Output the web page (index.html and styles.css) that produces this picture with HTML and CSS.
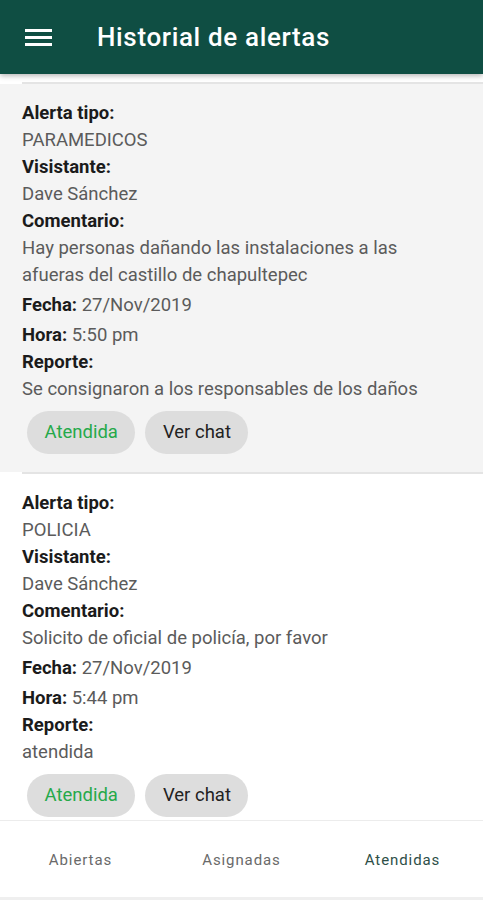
FILE: index.html
```html
<!DOCTYPE html>
<html lang="es">
<head>
<meta charset="utf-8">
<title>Historial de alertas</title>
<link rel="stylesheet" href="styles.css">
</head>
<body>
<div class="app">
  <header class="appbar">
    <svg class="menu" width="27" height="18" viewBox="0 0 27 18"><rect x="0" y="0" width="27" height="3" fill="#fff"/><rect x="0" y="7" width="27" height="3" fill="#fff"/><rect x="0" y="14" width="27" height="3" fill="#fff"/></svg>
    <h1 class="title">Historial de alertas</h1>
  </header>
  <main class="list">
    <div class="divider"></div>
    <section class="card card-pressed">
      <div class="label">Alerta tipo:</div>
      <div class="value">PARAMEDICOS</div>
      <div class="label">Visistante:</div>
      <div class="value">Dave Sánchez</div>
      <div class="label">Comentario:</div>
      <div class="value">Hay personas dañando las instalaciones a las afueras del castillo de chapultepec</div>
      <div class="inline"><span class="label-in">Fecha:</span> 27/Nov/2019</div>
      <div class="inline"><span class="label-in">Hora:</span> 5:50 pm</div>
      <div class="label">Reporte:</div>
      <div class="value">Se consignaron a los responsables de los daños</div>
      <div class="actions">
        <span class="chip chip-green">Atendida</span>
        <span class="chip">Ver chat</span>
      </div>
    </section>
    <div class="divider"></div>
    <section class="card">
      <div class="label">Alerta tipo:</div>
      <div class="value">POLICIA</div>
      <div class="label">Visistante:</div>
      <div class="value">Dave Sánchez</div>
      <div class="label">Comentario:</div>
      <div class="value">Solicito de oficial de policía, por favor</div>
      <div class="inline"><span class="label-in">Fecha:</span> 27/Nov/2019</div>
      <div class="inline"><span class="label-in">Hora:</span> 5:44 pm</div>
      <div class="label">Reporte:</div>
      <div class="value">atendida</div>
      <div class="actions">
        <span class="chip chip-green">Atendida</span>
        <span class="chip">Ver chat</span>
      </div>
    </section>
  </main>
  <nav class="tabs">
    <span class="tab">Abiertas</span>
    <span class="tab">Asignadas</span>
    <span class="tab tab-active">Atendidas</span>
  </nav>
</div>
</body>
</html>
```
FILE: styles.css
```css
html, body {
  margin: 0;
  padding: 0;
  background: #ffffff;
  font-family: Roboto, "Liberation Sans", sans-serif;
}
.app {
  width: 483px;
  height: 900px;
  display: flex;
  flex-direction: column;
  overflow: hidden;
}
.appbar {
  height: 74px;
  flex: none;
  background: #0f4e43;
  display: flex;
  align-items: center;
  box-shadow: 0 2px 5px rgba(0, 0, 0, 0.28);
  position: relative;
  z-index: 2;
}
.menu {
  margin-left: 25px;
  margin-right: 45px;
  margin-top: 1px;
}
.title {
  margin: 0;
  color: #ffffff;
  font-size: 26px;
  font-weight: 500;
  letter-spacing: 0.65px;
}
.list {
  flex: 1;
  overflow: hidden;
  padding-top: 8px;
  display: flex;
  flex-direction: column;
}
.divider {
  height: 2px;
  margin-left: 22px;
  background: #e4e4e4;
  flex: none;
}
.card {
  padding: 16px 22px 18px 22px;
  font-size: 18.5px;
  line-height: 27px;
  flex: none;
}
.card-pressed {
  background: #f4f4f4;
}
.label, .label-in {
  font-weight: 700;
  color: #1b1b1b;
}
.value {
  color: #5b5b5b;
}
.inline {
  color: #5b5b5b;
  margin-top: 3px;
}
.actions {
  display: flex;
  gap: 10px;
  margin-top: 8px;
  margin-left: 5px;
}
.chip {
  height: 43px;
  display: inline-flex;
  align-items: center;
  padding: 0 17.5px;
  border-radius: 22px;
  background: #dddddd;
  color: #222222;
  font-size: 18.5px;
}
.chip-green {
  color: #26a94a;
}
.tabs {
  height: 76px;
  flex: none;
  border-top: 1px solid #ececec;
  border-bottom: 3px solid #efefef;
  display: grid;
  grid-template-columns: 1fr 1fr 1fr;
  align-items: center;
  background: #ffffff;
}
.tab {
  text-align: center;
  font-size: 15px;
  letter-spacing: 0.9px;
  color: #6a6a6a;
  padding-top: 2px;
}
.tab-active {
  color: #2e4f48;
}
```
